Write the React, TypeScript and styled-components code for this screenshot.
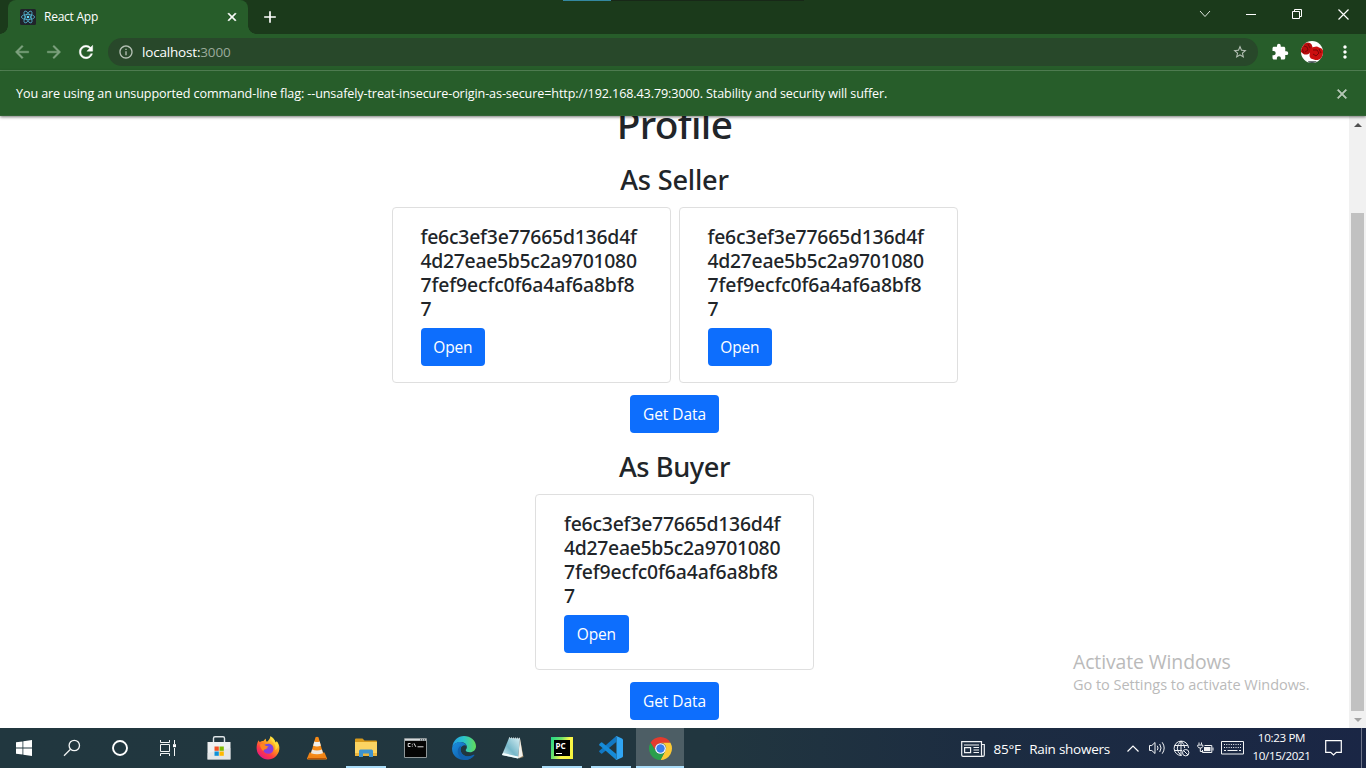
import React from 'react';
import styled, { createGlobalStyle, css } from 'styled-components';
import {
  MdArrowBack,
  MdArrowForward,
  MdRefresh,
  MdInfoOutline,
  MdStarBorder,
  MdExtension,
  MdMoreVert,
  MdClose,
  MdAdd,
} from 'react-icons/md';

const GlobalStyle = createGlobalStyle`
  * { box-sizing: border-box; }
  html, body { margin: 0; padding: 0; overflow: hidden; background: #fff; }
  body { font-family: 'Open Sans', 'Noto Sans', sans-serif; }
  svg { display: block; flex: none; }
`;

const Desktop = styled.div`
  position: relative;
  width: 1366px;
  height: 768px;
  display: flex;
  flex-direction: column;
  overflow: hidden;
`;

/* ---------- Browser frame ---------- */

const TabStrip = styled.header`
  flex: none;
  height: 34px;
  display: flex;
  align-items: stretch;
  padding-left: 8px;
  background: #1b3a1b;
  position: relative;
`;

const LoadStrip = styled.div`
  position: absolute;
  top: 0;
  left: 563px;
  width: 241px;
  height: 1px;
  background: linear-gradient(to right, #3488a0 48px, #182818 48px);
`;

const Tab = styled.div`
  position: relative;
  width: 240px;
  display: flex;
  align-items: center;
  padding: 0 9px 0 12px;
  border-radius: 8px 8px 0 0;
  background: #275d2a;
  color: #fff;

  &::before,
  &::after {
    content: '';
    position: absolute;
    bottom: 0;
    width: 8px;
    height: 8px;
  }
  &::before {
    left: -8px;
    background: radial-gradient(circle at 0 0, transparent 7.5px, #275d2a 8px);
  }
  &::after {
    right: -8px;
    background: radial-gradient(circle at 100% 0, transparent 7.5px, #275d2a 8px);
  }
`;

const TabTitle = styled.span`
  flex: 1;
  padding-left: 8px;
  font-size: 12px;
  line-height: 16px;
  letter-spacing: -0.25px;
`;

const NewTab = styled.div`
  width: 44px;
  display: flex;
  align-items: center;
  justify-content: center;
  color: #fff;
`;

const WindowControls = styled.div`
  margin-left: auto;
  display: flex;
  align-items: center;
  height: 28px;
`;

const WindowButton = styled.div`
  width: 46px;
  display: flex;
  justify-content: center;
`;

const Toolbar = styled.div`
  flex: none;
  height: 37px;
  display: flex;
  align-items: center;
  padding-bottom: 1px;
  background: #275d2a;
  border-bottom: 1px solid #578859;
  color: #fff;
`;

const NavButton = styled.div<{ $dim?: boolean }>`
  width: 32px;
  display: flex;
  justify-content: center;
  color: ${(p) => (p.$dim ? '#7ea27f' : '#fff')};
  &:first-child {
    margin-left: 6px;
  }
  path:not([fill='none']) {
    stroke: currentColor;
    stroke-width: 0.5px;
  }
`;

const AddressBar = styled.div`
  width: 1150px;
  height: 28px;
  margin-left: 6px;
  padding: 0 10px;
  display: flex;
  align-items: center;
  gap: 8px;
  border-radius: 14px;
  background: #28482a;
  color: #b5c1b5;
`;

const Url = styled.span`
  flex: 1;
  font-size: 13.5px;
  line-height: 18px;
  letter-spacing: -0.18px;
  color: #fff;
  em {
    font-style: normal;
    color: #9aaa9b;
  }
`;

const ToolbarEnd = styled.div`
  display: flex;
  align-items: center;
  margin-left: 13px;
  gap: 12px;
`;

const InfoBar = styled.div`
  position: relative;
  z-index: 1;
  flex: none;
  height: 45px;
  display: flex;
  align-items: center;
  justify-content: space-between;
  padding: 1px 16px 0;
  background: #275d2a;
  border-bottom: 1px solid #316334;
  box-shadow: 0 1px 3px rgba(0, 0, 0, 0.55);
  color: #fff;
  font-size: 12.6px;
  letter-spacing: -0.106px;
  white-space: nowrap;
`;

/* ---------- Page ---------- */

const Viewport = styled.div`
  flex: none;
  height: 612px;
  display: flex;
  overflow: hidden;
  background: #fff;
`;

const Page = styled.main`
  flex: 1;
  height: 628px;
  margin-top: -16px;
  display: flex;
  flex-direction: column;
  align-items: center;
  color: #212529;
  font-family: 'Noto Sans', 'Open Sans', sans-serif;
`;

const PageTitle = styled.h1`
  flex: none;
  margin: 0 0 14.8px;
  font-size: 38.8px;
  line-height: 48px;
  font-weight: 500;
  letter-spacing: -0.65px;
`;

const SectionTitle = styled.h3<{ $track: number }>`
  flex: none;
  margin: 0 0 10.6px;
  font-size: 27.2px;
  line-height: 33.6px;
  font-weight: 500;
  letter-spacing: ${(p) => p.$track}px;
`;

const CardRow = styled.div`
  flex: none;
  display: flex;
  gap: 8px;
  margin-bottom: 12px;
`;

const Card = styled.article`
  width: 279px;
  height: 176px;
  padding: 17px 28px 15px;
  border: 1px solid #dfdfdf;
  border-radius: 4px;
  background: #fff;
`;

const Hash = styled.h5`
  margin: 0 0 7px;
  font-size: 19.4px;
  line-height: 24px;
  font-weight: 500;
`;

const HashLine = styled.span<{ $track: number }>`
  display: block;
  letter-spacing: ${(p) => p.$track}px;
  white-space: nowrap;
`;

const Button = styled.button<{ $spaced?: boolean }>`
  flex: none;
  display: block;
  height: 38px;
  padding: 0 12.8px;
  border: 0;
  border-radius: 4px;
  background: #0d6efd;
  color: #fff;
  font-family: 'Open Sans', sans-serif;
  font-size: 15.5px;
  line-height: 24px;
  letter-spacing: -0.2px;
  ${(p) =>
    p.$spaced &&
    css`
      margin-bottom: 16.8px;
      letter-spacing: -0.08px;
    `}
`;

const Scrollbar = styled.div`
  width: 17px;
  display: flex;
  flex-direction: column;
  align-items: center;
  justify-content: space-between;
  background: #f1f1f1;
`;

const ScrollArrow = styled.div`
  height: 17px;
  display: flex;
  align-items: center;
`;

const ScrollThumb = styled.div`
  width: 13px;
  height: 498px;
  margin-top: auto;
  background: #c1c1c1;
`;

const Watermark = styled.aside`
  position: absolute;
  left: 1073px;
  top: 649px;
  color: #bababa;
  white-space: nowrap;
`;

const WatermarkTitle = styled.div`
  font-size: 19.4px;
  line-height: 26px;
  letter-spacing: -0.1px;
`;

const WatermarkText = styled.div`
  font-size: 14.5px;
  line-height: 20px;
  letter-spacing: -0.03px;
`;

/* ---------- Taskbar ---------- */

const Taskbar = styled.footer`
  flex: none;
  height: 40px;
  display: flex;
  align-items: stretch;
  background: linear-gradient(to right, #21373f 0%, #21363f 52%, #1c2c41 72%, #1a2645 100%);
  color: #fff;
`;

const SystemButton = styled.div`
  width: 48px;
  display: flex;
  align-items: center;
  justify-content: center;
`;

const AppList = styled.div`
  display: flex;
  gap: 1px;
  margin-left: 3px;
`;

const AppButton = styled.div<{ $state?: 'open' | 'active' }>`
  width: 48px;
  display: flex;
  align-items: center;
  justify-content: center;
  ${(p) =>
    p.$state === 'open' &&
    css`
      background: linear-gradient(#a9dcf8, #a9dcf8) center bottom / 40px 2px no-repeat;
    `}
  ${(p) =>
    p.$state === 'active' &&
    css`
      background: #4d5e65;
      box-shadow: inset 0 -2px #a9dcf8;
    `}
`;

const Tray = styled.div`
  margin-left: auto;
  display: flex;
  align-items: center;
`;

const Weather = styled.div`
  display: flex;
  align-items: center;
  gap: 8.5px;
  width: 160px;
  padding-top: 1px;
  font-size: 13.5px;
  letter-spacing: -0.26px;
  white-space: nowrap;
`;

const TrayIcon = styled.div<{ $w: number }>`
  width: ${(p) => p.$w}px;
  display: flex;
  justify-content: center;
`;

const Clock = styled.div`
  width: 69px;
  text-align: center;
  font-size: 11.6px;
  line-height: 18px;
  letter-spacing: -0.33px;
  padding-bottom: 2px;
`;

const ActionCenter = styled.div`
  width: 45px;
  display: flex;
  justify-content: center;
  padding-right: 11px;
`;

const ShowDesktop = styled.div`
  width: 5px;
  align-self: stretch;
  border-left: 1px solid #6d7489;
`;

/* ---------- Drawings ---------- */

const BoldClose = styled(MdClose)`
  path:not([fill='none']) {
    stroke: currentColor;
    stroke-width: 1px;
  }
`;

const ReactFavicon = () => (
  <svg width="16" height="16" viewBox="0 0 16 16">
    <rect width="16" height="16" rx="1.5" fill="#20232a" />
    <g fill="none" stroke="#53b5d2" strokeWidth="0.8">
      <ellipse cx="8" cy="8" rx="6.6" ry="2.6" />
      <ellipse cx="8" cy="8" rx="6.6" ry="2.6" transform="rotate(60 8 8)" />
      <ellipse cx="8" cy="8" rx="6.6" ry="2.6" transform="rotate(120 8 8)" />
    </g>
    <circle cx="8" cy="8" r="1.3" fill="#61dafb" />
  </svg>
);

const Avatar = () => (
  <svg width="22" height="22" viewBox="0 0 22 22">
    <defs>
      <clipPath id="avatarClip">
        <circle cx="11" cy="11" r="11" />
      </clipPath>
    </defs>
    <g clipPath="url(#avatarClip)">
      <rect width="22" height="22" fill="#fff" />
      <path d="M7 20.200h9l-3 2H8z" fill="#3b4a4a" />
      <path d="M0 5.500q1-3 4-3.500 3-1 5 0t2.500 4l-1 4-3 3q-3 1-5 0L0 11z" fill="#b80c0c" />
      <path d="M9 9q1-3 4-3 3-1 5 .5 3 .5 4 2.500v5q-1 4-4 4.500-3 1-5 0-4-.5-4.500-3.500z" fill="#cb0f0f" />
      <path d="M3 5l3 1 1 3-3 2M7 3l2 4M12 9l4 0 2 3-3 3-3-2M18 8l2 4M1 8l2 4" fill="none" stroke="#7c0707" />
    </g>
  </svg>
);

const CaretGlyph = () => (
  <svg width="12" height="8" viewBox="0 0 12 8" fill="none" stroke="#dfe6df">
    <path d="M1 1l5 5.500L11 1" />
  </svg>
);
const MinimizeGlyph = () => (
  <svg width="10" height="10" viewBox="0 0 10 10">
    <path d="M0 5.500h10" stroke="#fff" />
  </svg>
);
const RestoreGlyph = () => (
  <svg width="10" height="10" viewBox="0 0 10 10" fill="none" stroke="#fff">
    <path d="M.5 2.500h7v7h-7zM2.500 2.500v-2h7v7h-2" />
  </svg>
);
const CloseGlyph = () => (
  <svg width="11" height="11" viewBox="0 0 11 11">
    <path d="M.5 .5l10 10M10.500 .5l-10 10" stroke="#fff" strokeWidth="1.200" />
  </svg>
);

const WindowsLogo = () => (
  <svg width="16" height="16" viewBox="0 0 16 16" fill="#fff">
    <path d="M0 2.300l6.500-.9v6.200H0zM7.300 1.300L16 0v7.600H7.300zM0 8.400h6.500v6.200L0 13.700zM7.300 8.400H16V16l-8.700-1.300z" />
  </svg>
);
const SearchGlyph = () => (
  <svg width="18" height="18" viewBox="0 0 18 18" fill="none" stroke="#f2f5f5" strokeWidth="1.300">
    <circle cx="11.300" cy="6.500" r="5.200" />
    <path d="M7.500 10.300L1 16.800" />
  </svg>
);
const CortanaGlyph = () => (
  <svg width="18" height="18" viewBox="0 0 18 18" fill="none">
    <circle cx="9" cy="9" r="7" stroke="#fff" strokeWidth="1.900" />
  </svg>
);
const TaskViewGlyph = () => (
  <svg width="18" height="18" viewBox="0 0 18 18" fill="none" stroke="#f2f5f5">
    <path d="M1.500 1v2.500h9V1M1.500 17v-2.500h9V17M1.500 5.500h9v7h-9zM15.500 1v4M15.500 9v8" />
    <path d="M14 5.200h3v3h-3z" fill="#fff" stroke="none" />
  </svg>
);

const StoreIcon = () => (
  <svg width="24" height="26" viewBox="0 0 24 26">
    <path d="M6.500 8V3.200q0-1.500 1.500-1.500h8q1.500 0 1.500 1.500V8" fill="none" stroke="#dfe5e8" strokeWidth="1.400" />
    <path d="M.5 7h23v17.500h-23z" fill="#eef0f1" />
    <path d="M.5 18l23-5v11.500H.5z" fill="#dcdfe1" opacity=".6" />
    <path d="M7.500 11.500h4.300v4.300H7.500z" fill="#f25022" />
    <path d="M12.500 11.500h4.300v4.300h-4.300z" fill="#7fba00" />
    <path d="M7.500 16.500h4.300v4.300H7.500z" fill="#0f91d8" />
    <path d="M12.500 16.500h4.300v4.300h-4.300z" fill="#ffb900" />
  </svg>
);
const FirefoxIcon = () => (
  <svg width="24" height="24" viewBox="0 0 24 24">
    <defs>
      <linearGradient id="ffBody" x1="0.85" y1="0.05" x2="0.2" y2="0.95">
        <stop offset="0" stopColor="#fff04a" />
        <stop offset=".4" stopColor="#ff9a1c" />
        <stop offset=".7" stopColor="#ff3c42" />
        <stop offset="1" stopColor="#e31587" />
      </linearGradient>
      <linearGradient id="ffOrb" x1="0" y1="0" x2="1" y2="1">
        <stop offset="0" stopColor="#5a55e8" />
        <stop offset="1" stopColor="#a32fd8" />
      </linearGradient>
    </defs>
    <path d="M2.500 4.200c.6 1 .8 1.400 1.500 2C5 5.300 6.500 5 7.500 5.100 8 4 9 3 10 2.700c-.4 1 0 2.300 1 3C12.500 4.500 14 3 14.500.3 17 1.800 19 4 19.500 6.500c.6-.2 1-.8 1.200-1.500C23 8 23.700 10.500 23.300 13.500 22.500 19.500 17.500 23.500 12 23.500S1.300 19.300.7 13.300C.4 10 1 7 2.500 4.200z" fill="url(#ffBody)" />
    <path d="M7.500 9c2-.5 3.500-1.500 6-1.200 2.500.6 4 2.700 4 5 0 3-2.400 5-5.200 5s-5-1.800-5.300-4.300C9 14 10.500 13 12 11.700c-2-.2-3.500-1-4.500-2.700z" fill="url(#ffOrb)" />
    <path d="M4 8.500C6 7 8 8 9 9.300c.8.900 2 .9 3.700 1-1 1.200-2.300 1.200-2.700 2.500-1.400.4-2.500 1-2.500 2.500C5.500 13.500 4 11.500 4 8.500z" fill="#ff8422" />
    <path d="M14.500.3c-.2 3 1.300 4.500 3 6.200 2.300 2.600 2.300 5 1.500 7.500 3-1.200 4-4.500 2.500-7.500l-2 0C19 4 17 1.800 14.500.3z" fill="#ffe13c" opacity=".75" />
  </svg>
);
const VlcIcon = () => (
  <svg width="22" height="24" viewBox="0 0 22 24">
    <path d="M3.500 16.500h15l2.500 6q0 1-1 1H2q-1 0-1-1z" fill="#f08416" />
    <path d="M9.500 1.200q1.500-.8 3 0L17.500 19q-6.500 3-13 0z" fill="#f58a18" />
    <path d="M8.300 5.500q2.700 1 5.400 0l1.200 4.300q-3.900 1.500-7.800 0z" fill="#f3f0ea" />
    <path d="M6 13.500q5 2 10 0l1 3.700q-6 2.300-12 0z" fill="#eee8df" />
    <path d="M2 22.500h18" stroke="#b85608" />
  </svg>
);
const ExplorerIcon = () => (
  <svg width="22" height="20" viewBox="0 0 22 20">
    <path d="M0 1.500Q0 .5 1 .5h6.500l2 2H21q1 0 1 1V6H0z" fill="#d79a1c" />
    <path d="M0 4h22v13.500H0z" fill="#fcd462" />
    <path d="M0 15h22v3H0z" fill="#edb53b" />
    <path d="M4 19v-6q0-1.500 1.500-1.500h11q1.500 0 1.500 1.500v6h-4v-3.500H8V19z" fill="#3e93cf" />
  </svg>
);
const TerminalIcon = () => (
  <svg width="23" height="20" viewBox="0 0 23 20">
    <path d="M.5 .5h22v19H.5z" fill="#050505" stroke="#8f9799" />
    <path d="M1 1h21v1.800H1z" fill="#d4d9db" />
    <path d="M16 1.200h1.200v1.200H16zM18 1.200h1.200v1.200H18zM20 1.200h1.200v1.200H20z" fill="#48545a" />
    <path d="M6.500 5.500H4.200v3h2.300M8.300 5.800v.9M8.300 7.700v.9M10 5.300l1.800 3.500M13.500 8.800h6" fill="none" stroke="#ddd" />
  </svg>
);
const EdgeIcon = () => (
  <svg width="24" height="24" viewBox="0 0 24 24">
    <defs>
      <linearGradient id="edgeTop" x1="0" y1=".5" x2="1" y2=".5">
        <stop offset="0" stopColor="#239fe8" />
        <stop offset=".5" stopColor="#2cc5c8" />
        <stop offset="1" stopColor="#62dd58" />
      </linearGradient>
      <linearGradient id="edgeLow" x1="0" y1="0" x2="1" y2="1">
        <stop offset="0" stopColor="#1b8fe0" />
        <stop offset="1" stopColor="#0b4f9b" />
      </linearGradient>
    </defs>
    <path d="M.3 11C1 4.500 6 0 12 0c6.500 0 12 4.500 12 10.300 0 3.700-3 6-6 6-2.700 0-4.300-1-4.300-2 0-.8 1.200-1.300 1.200-3.200C14.900 8.500 12.500 6 8.700 6 4.500 6 1.200 8.500.3 11z" fill="url(#edgeTop)" />
    <path d="M.1 12C.8 8.300 4.500 6 8.300 6.100 11.500 6.200 14 8 14.600 10c-1.500-1.400-5.500-.7-6 3-.5 4 3 7.500 7.400 7.500 2.500 0 4.700-1 5.700-1.700.5-.2.800.1.500.6C20 22.300 16.300 24 12.500 24 5.500 24-.5 19 .1 12z" fill="url(#edgeLow)" />
    <path d="M8.700 9.700C5.800 11.800 5 15.300 6.500 18.500c1.200 2.700 3.700 4.700 6.500 5.400 3.700-.1 7-1.700 9.200-4.500.3-.5 0-.8-.5-.6-1 .7-3.200 1.500-5.700 1.500-4.200 0-7.800-3.300-7.500-7.300.1-1.300.5-2.300.2-3.300z" fill="#1261ad" />
  </svg>
);
const NotepadIcon = () => (
  <svg width="24" height="24" viewBox="0 0 24 24">
    <defs>
      <linearGradient id="noteFace" x1="0" y1="1" x2="1" y2="0">
        <stop offset="0" stopColor="#e8f5f7" />
        <stop offset=".45" stopColor="#75b7c9" />
        <stop offset="1" stopColor="#d6eef3" />
      </linearGradient>
    </defs>
    <path d="M19 3l3.500 18-4.500 1.500z" fill="#9b835e" />
    <path d="M8 2l11 .5-2 20L1 19z" fill="url(#noteFace)" />
    <path d="M19 2.500L21.800 20l-4.800 2.500z" fill="#f2f1eb" />
    <path d="M1 19l16 3.500.3-2L2 17z" fill="#f3fbfc" />
    <path d="M8 2l11 .5" stroke="#ccd9dc" strokeWidth="1.500" strokeDasharray="1 1" />
  </svg>
);
const PcLabel = styled.span`
  position: relative;
  width: 22px;
  height: 22px;
  padding: 3.5px 0 0 4.5px;
  background: linear-gradient(#000, #000) center / 16px 16px no-repeat,
    linear-gradient(115deg, #21d789 0%, #6ee26b 35%, #fcf84a 60%, #f3f23c 100%);
  font: 700 8px/9px 'Noto Sans', sans-serif;
  &::after {
    content: '';
    position: absolute;
    left: 5px;
    top: 16px;
    width: 6px;
    height: 1px;
    background: #fff;
  }
`;
const VsCodeIcon = () => (
  <svg width="24" height="24" viewBox="0 0 24 24">
    <path d="M17.300 0v6L3.200 17.500q-.6.400-1.100 0L.4 16q-.6-.6 0-1.200z" fill="#1178c4" />
    <path d="M17.300 24v-6L3.200 6.500q-.6-.4-1.100 0L.4 8q-.6.600 0 1.200z" fill="#168bd8" />
    <path d="M16.700.2q.6-.4 1.300 0l5 2.300q1 .5 1 1.500v16q0 1-1 1.500l-5 2.300q-.9.300-1.500-.3 1 .4 1-1V1.500q0-1.400-.8-1.300z" fill="#30a5f3" />
  </svg>
);
const ChromeIcon = () => (
  <svg width="23" height="23" viewBox="0 0 24 24">
    <path d="M1.610 6A12 12 0 0 1 22.390 6L12 6.500A5.500 5.500 0 0 0 7.200 14.700z" fill="#e33b2e" />
    <path d="M22.390 6A12 12 0 0 1 12 24L16.800 14.750A5.500 5.500 0 0 0 12 6z" fill="#fcc934" />
    <path d="M12 24A12 12 0 0 1 1.610 6L7.240 14.750A5.500 5.500 0 0 0 16.800 14.750z" fill="#2a9f4c" />
    <circle cx="12" cy="12" r="5.600" fill="#fff" />
    <circle cx="12" cy="12" r="4.400" fill="#3b7ded" />
  </svg>
);

const NewsGlyph = () => (
  <svg width="24" height="16" viewBox="0 0 24 16" fill="none" stroke="#f1f3f5" strokeWidth="1.200">
    <path d="M20.500 13.500V.7H.7V14q0 1.300 1.300 1.300h20q1.300 0 1.300-1.300V3.500h-2.800M20.500 13.500q.2 1.800 1.500 1.800" />
    <path d="M3 4h15M12.500 6.500H18M12.500 9H18M12.500 11.500H18M3.600 6.600h6v5h-6z" />
  </svg>
);
const ChevronUpGlyph = () => (
  <svg width="12" height="7" viewBox="0 0 12 7" fill="none" stroke="#fff" strokeWidth="1.200">
    <path d="M.5 6.500L6 1l5.500 5.500" />
  </svg>
);
const SpeakerGlyph = () => (
  <svg width="17" height="14" viewBox="0 0 17 14" fill="none" stroke="#f1f3f5">
    <path d="M.5 4.500h2.300L6 1.500v11L2.800 9.500H.5zM8.300 4.800q1.500 2.200 0 4.400M10.700 3q2.700 4 0 8M13.200 1.300q4 5.700 0 11.400" />
  </svg>
);
const GlobeGlyph = () => (
  <svg width="17" height="17" viewBox="0 0 17 17" fill="none" stroke="#f1f3f5">
    <path d="M8.500 15.500A7.200 7.200 0 1 1 15.500 8" />
    <path d="M1.500 5.500h13.300M1.500 10.500h7.500M8 1v14.500M8 1Q4.300 4.500 4.300 8.200T8 15.500M8 1q3.700 3.500 3.700 7" />
    <circle cx="12.700" cy="12.700" r="3.200" />
    <path d="M10.500 10.500l4.500 4.500" />
  </svg>
);
const BatteryGlyph = () => (
  <svg width="17" height="12" viewBox="0 0 17 12" fill="none" stroke="#f1f3f5">
    <path d="M2 .5v2M4.500 .5v2M.8 3h5v1.500q-.3 1.500-2.500 1.500T.8 4.500zM3.300 6v3.500h3" />
    <path d="M7.500 3.500h7.300v7H5.500V8M16 5.500v3" />
    <path d="M7 5h6.500v4.200H7z" fill="#f1f3f5" stroke="none" />
  </svg>
);
const KeyboardGlyph = () => (
  <svg width="23" height="14" viewBox="0 0 23 14" fill="none" stroke="#f1f3f5">
    <path d="M.5 .5h22v12.500H.5z" />
    <path d="M3 3.500h17M3 6.500h17" strokeDasharray="1 1.300" />
    <path d="M3 9.500h2M6.500 9.500h10M18 9.500h2" />
  </svg>
);
const ActionGlyph = () => (
  <svg width="17" height="16" viewBox="0 0 17 16" fill="none" stroke="#fff" strokeWidth="1.200">
    <path d="M.7 .7h15.600v11.600h-5L8.500 15l-2.800-2.700h-5z" />
  </svg>
);

const hashLines = [
  { text: 'fe6c3ef3e77665d136d4f', track: -0.22 },
  { text: '4d27eae5b5c2a9701080', track: -0.3 },
  { text: '7fef9ecfc0f6a4af6a8bf8', track: -0.13 },
  { text: '7', track: 0 },
];

const ContractCard = () => (
  <Card>
    <Hash>
      {hashLines.map((line) => (
        <HashLine key={line.text} $track={line.track}>
          {line.text}
        </HashLine>
      ))}
    </Hash>
    <Button>Open</Button>
  </Card>
);

export default function App() {
  return (
    <Desktop>
      <GlobalStyle />
      <TabStrip>
        <LoadStrip />
        <Tab>
          <ReactFavicon />
          <TabTitle>React App</TabTitle>
          <BoldClose size={14} />
        </Tab>
        <NewTab>
          <MdAdd size={20} />
        </NewTab>
        <WindowControls>
          <WindowButton><CaretGlyph /></WindowButton>
          <WindowButton><MinimizeGlyph /></WindowButton>
          <WindowButton><RestoreGlyph /></WindowButton>
          <WindowButton><CloseGlyph /></WindowButton>
        </WindowControls>
      </TabStrip>

      <Toolbar>
        <NavButton $dim><MdArrowBack size={20} /></NavButton>
        <NavButton $dim><MdArrowForward size={20} /></NavButton>
        <NavButton><MdRefresh size={20} /></NavButton>
        <AddressBar>
          <MdInfoOutline size={16} />
          <Url>localhost:<em>3000</em></Url>
          <MdStarBorder size={16} />
        </AddressBar>
        <ToolbarEnd>
          <MdExtension size={18} />
          <Avatar />
          <MdMoreVert size={20} />
        </ToolbarEnd>
      </Toolbar>

      <InfoBar>
        <span>
          You are using an unsupported command-line flag: --unsafely-treat-insecure-origin-as-secure=http://192.168.43.79:3000. Stability and security will suffer.
        </span>
        <BoldClose size={16} color="#b4c6b5" />
      </InfoBar>

      <Viewport>
        <Page>
          <PageTitle>Profile</PageTitle>
          <SectionTitle $track={-0.2}>As Seller</SectionTitle>
          <CardRow>
            <ContractCard />
            <ContractCard />
          </CardRow>
          <Button $spaced>Get Data</Button>
          <SectionTitle $track={-0.4}>As Buyer</SectionTitle>
          <CardRow>
            <ContractCard />
          </CardRow>
          <Button $spaced>Get Data</Button>
        </Page>
        <Scrollbar>
          <ScrollArrow>
            <svg width="8" height="4" viewBox="0 0 8 4"><path d="M4 0l4 4H0z" fill="#505050" /></svg>
          </ScrollArrow>
          <ScrollThumb />
          <ScrollArrow>
            <svg width="8" height="4" viewBox="0 0 8 4"><path d="M4 4L0 0h8z" fill="#a3a3a3" /></svg>
          </ScrollArrow>
        </Scrollbar>
      </Viewport>

      <Watermark>
        <WatermarkTitle>Activate Windows</WatermarkTitle>
        <WatermarkText>Go to Settings to activate Windows.</WatermarkText>
      </Watermark>

      <Taskbar>
        <SystemButton><WindowsLogo /></SystemButton>
        <SystemButton><SearchGlyph /></SystemButton>
        <SystemButton><CortanaGlyph /></SystemButton>
        <SystemButton><TaskViewGlyph /></SystemButton>
        <AppList>
          <AppButton><StoreIcon /></AppButton>
          <AppButton><FirefoxIcon /></AppButton>
          <AppButton><VlcIcon /></AppButton>
          <AppButton $state="open"><ExplorerIcon /></AppButton>
          <AppButton><TerminalIcon /></AppButton>
          <AppButton><EdgeIcon /></AppButton>
          <AppButton><NotepadIcon /></AppButton>
          <AppButton $state="open"><PcLabel>PC</PcLabel></AppButton>
          <AppButton $state="open"><VsCodeIcon /></AppButton>
          <AppButton $state="active"><ChromeIcon /></AppButton>
        </AppList>
        <Tray>
          <Weather>
            <NewsGlyph />
            <span>85°F</span>
            <span>Rain showers</span>
          </Weather>
          <TrayIcon $w={24}><ChevronUpGlyph /></TrayIcon>
          <TrayIcon $w={24}><SpeakerGlyph /></TrayIcon>
          <TrayIcon $w={24}><GlobeGlyph /></TrayIcon>
          <TrayIcon $w={24}><BatteryGlyph /></TrayIcon>
          <TrayIcon $w={30}><KeyboardGlyph /></TrayIcon>
          <Clock>
            <div>10:23 PM</div>
            <div>10/15/2021</div>
          </Clock>
          <ActionCenter><ActionGlyph /></ActionCenter>
          <ShowDesktop />
        </Tray>
      </Taskbar>
    </Desktop>
  );
}
